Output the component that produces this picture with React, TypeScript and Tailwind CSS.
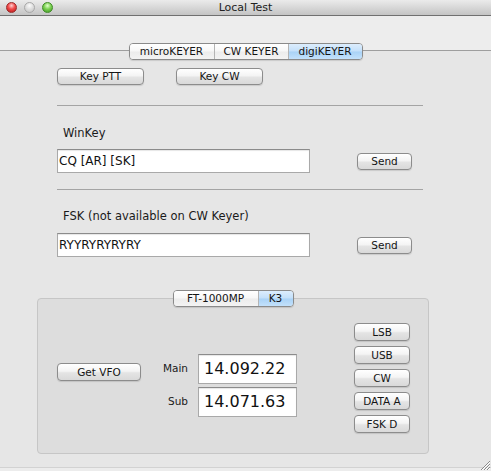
import React from "react";

type Seg = { label: string; w: string; active?: boolean };

function AquaButton({ label, className }: { label: string; className: string }) {
  return (
    <button
      type="button"
      className={`flex items-center justify-center rounded-[4px] border border-[#8c8c8c] bg-[linear-gradient(to_bottom,#ffffff_0%,#f4f4f4_45%,#e4e4e4_55%,#d9d9d9_100%)] text-[10.5px] leading-none text-[#141414] shadow-[0_1px_1px_rgba(0,0,0,0.12)] ${className}`}
    >
      {label}
    </button>
  );
}

function Segmented({ items }: { items: Seg[] }) {
  return (
    <div className="flex h-[17px] overflow-hidden rounded-[4px] border border-[#8a8a8a] shadow-[0_1px_1px_rgba(0,0,0,0.12)]">
      {items.map((item, i) => (
        <div
          key={item.label}
          className={`flex items-center justify-center text-[10.5px] leading-none text-[#141414] ${item.w} ${
            i > 0 ? "border-l border-[#b4b4b4]" : ""
          } ${
            item.active
              ? "bg-[linear-gradient(to_bottom,#dcedfd_0%,#c4e0fa_48%,#a9d2f6_52%,#c3e1fb_100%)]"
              : "bg-[linear-gradient(to_bottom,#ffffff_0%,#f7f7f7_48%,#ececec_52%,#f3f3f3_100%)]"
          }`}
        >
          {item.label}
        </div>
      ))}
    </div>
  );
}

function TextField({ value, className }: { value: string; className: string }) {
  return (
    <div
      className={`flex items-center border border-[#a9a9a9] border-t-[#8b8b8b] bg-white shadow-[inset_0_1px_1px_rgba(0,0,0,0.1)] text-[#111] ${className}`}
    >
      {value}
    </div>
  );
}

export default function App() {
  return (
    <div className="relative flex h-[471px] w-[491px] flex-col overflow-hidden bg-[#e6e6e6] font-['DejaVu_Sans',sans-serif] text-[#1a1a1a]">
      {/* title bar */}
      <div className="grid h-[16px] grid-cols-[1fr_auto_1fr] items-center border-b border-[#707070] bg-[linear-gradient(to_bottom,#ebebeb,#c4c4c4)]">
        <div className="flex items-center gap-[7px] pl-[6px]">
          <span className="h-[11px] w-[11px] rounded-full border border-[#9a2a2a] bg-[radial-gradient(circle_at_50%_30%,#ffd0d0_0%,#f14a4a_45%,#b41414_100%)]" />
          <span className="h-[11px] w-[11px] rounded-full border border-[#a8a8a8] bg-[radial-gradient(circle_at_50%_30%,#fbfbfb_0%,#dcdcdc_50%,#c2c2c2_100%)]" />
          <span className="h-[11px] w-[11px] rounded-full border border-[#3f8a26] bg-[radial-gradient(circle_at_50%_30%,#e2ffcc_0%,#7bd152_45%,#3c9420_100%)]" />
        </div>
        <div className="text-[11px] leading-none text-[#222]">Local Test</div>
        <div />
      </div>

      {/* toolbar area */}
      <div className="h-[35px] border-b border-[#9e9e9e] bg-[#ededed]" />

      {/* tab pane */}
      <div className="flex flex-1 flex-col border-b border-[#d2d2d2]">
        <div className="-mt-[8px] flex justify-center">
          <Segmented
            items={[
              { label: "microKEYER", w: "w-[84px]" },
              { label: "CW KEYER", w: "w-[74px]" },
              { label: "digiKEYER", w: "w-[74px]", active: true },
            ]}
          />
        </div>

        <div className="mt-[8px] flex gap-[32px] pl-[57px]">
          <AquaButton label="Key PTT" className="h-[17px] w-[87px]" />
          <AquaButton label="Key CW" className="h-[17px] w-[87px]" />
        </div>

        <div className="ml-[57px] mt-[20px] h-px w-[366px] bg-[#a4a4a4]" />

        <div className="ml-[63px] mt-[20px] text-[11.5px] leading-[14px]">WinKey</div>
        <div className="ml-[57px] mt-[9px] flex items-center gap-[47px]">
          <TextField value="CQ [AR] [SK]" className="h-[24px] w-[253px] pl-[1px] text-[12px]" />
          <AquaButton label="Send" className="h-[17px] w-[55px]" />
        </div>

        <div className="ml-[57px] mt-[16px] h-px w-[366px] bg-[#a4a4a4]" />

        <div className="ml-[63px] mt-[19px] text-[11.5px] leading-[14px]">FSK (not available on CW Keyer)</div>
        <div className="ml-[57px] mt-[10px] flex items-center gap-[47px]">
          <TextField value="RYYRYRYRYRY" className="h-[24px] w-[253px] pl-[1px] text-[12px]" />
          <AquaButton label="Send" className="h-[17px] w-[55px]" />
        </div>

        {/* radio group box */}
        <div className="ml-[37px] mt-[41px] flex h-[156px] w-[392px] flex-col rounded-[4px] border border-[#c6c6c6] bg-[#dddddd]">
          <div className="-mt-[9px] flex justify-center">
            <Segmented
              items={[
                { label: "FT-1000MP", w: "w-[84px]" },
                { label: "K3", w: "w-[35px]", active: true },
              ]}
            />
          </div>
          <div className="flex items-start pl-[19px] pr-[18px]">
            <AquaButton label="Get VFO" className="mt-[56px] h-[18px] w-[84px]" />
            <div className="ml-[7px] mt-[47px] grid grid-cols-[40px_99px] items-center gap-x-[10px] gap-y-[3px]">
              <div className="text-right text-[10.5px]">Main</div>
              <TextField value="14.092.22" className="h-[30px] pl-[5px] text-[16px]" />
              <div className="text-right text-[10.5px]">Sub</div>
              <TextField value="14.071.63" className="h-[30px] pl-[5px] text-[16px]" />
            </div>
            <div className="ml-auto mt-[16px] flex flex-col gap-[5px]">
              {["LSB", "USB", "CW", "DATA A", "FSK D"].map((m) => (
                <AquaButton key={m} label={m} className="h-[18px] w-[56px]" />
              ))}
            </div>
          </div>
        </div>
      </div>
      <div className="h-[3px] bg-[#ececec]" />

      {/* resize grip */}
      <svg className="absolute bottom-0 right-0" width="12" height="12" viewBox="0 0 12 12">
        <path d="M11 2 L2 11 M11 5 L5 11 M11 8 L8 11" stroke="#8a8a8a" strokeWidth="1" />
        <path d="M11 3 L3 11 M11 6 L6 11 M11 9 L9 11" stroke="#ffffff" strokeWidth="1" />
      </svg>
    </div>
  );
}
